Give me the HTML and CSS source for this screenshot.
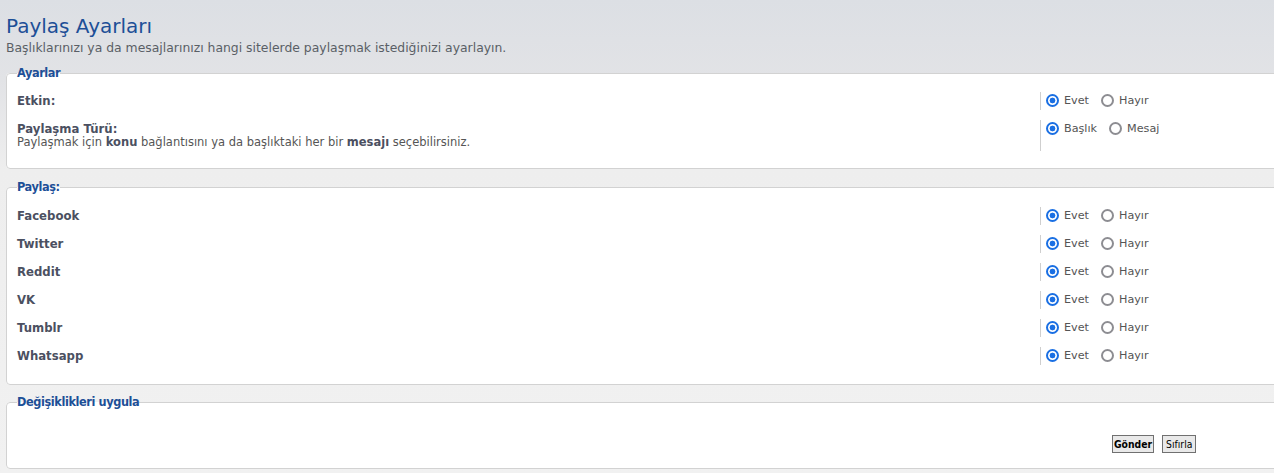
FILE: index.html
```html
<!DOCTYPE html>
<html lang="tr">
<head>
<meta charset="utf-8">
<title>Paylaş Ayarları</title>
<link rel="stylesheet" href="styles.css">
</head>
<body>
<div class="page">
  <div class="head">
    <h1 class="title">Paylaş Ayarları</h1>
    <p class="subtitle">Başlıklarınızı ya da mesajlarınızı hangi sitelerde paylaşmak istediğinizi ayarlayın.</p>
  </div>

  <fieldset class="box settings">
    <legend class="legend">Ayarlar</legend>
    <div class="row first">
      <div class="label"><span class="name">Etkin:</span></div>
      <div class="opts">
        <label class="opt"><input type="radio" name="enabled" checked> Evet</label>
        <label class="opt"><input type="radio" name="enabled"> Hayır</label>
      </div>
    </div>
    <div class="row">
      <div class="label">
        <span class="name">Paylaşma Türü:</span>
        <span class="desc">Paylaşmak için <b>konu</b> bağlantısını ya da başlıktaki her bir <b>mesajı</b> seçebilirsiniz.</span>
      </div>
      <div class="opts">
        <label class="opt"><input type="radio" name="type" checked> Başlık</label>
        <label class="opt"><input type="radio" name="type"> Mesaj</label>
      </div>
    </div>
  </fieldset>

  <fieldset class="box share">
    <legend class="legend">Paylaş:</legend>
    <div class="row first">
      <div class="label"><span class="name">Facebook</span></div>
      <div class="opts">
        <label class="opt"><input type="radio" name="fb" checked> Evet</label>
        <label class="opt"><input type="radio" name="fb"> Hayır</label>
      </div>
    </div>
    <div class="row">
      <div class="label"><span class="name">Twitter</span></div>
      <div class="opts">
        <label class="opt"><input type="radio" name="tw" checked> Evet</label>
        <label class="opt"><input type="radio" name="tw"> Hayır</label>
      </div>
    </div>
    <div class="row">
      <div class="label"><span class="name">Reddit</span></div>
      <div class="opts">
        <label class="opt"><input type="radio" name="rd" checked> Evet</label>
        <label class="opt"><input type="radio" name="rd"> Hayır</label>
      </div>
    </div>
    <div class="row">
      <div class="label"><span class="name">VK</span></div>
      <div class="opts">
        <label class="opt"><input type="radio" name="vk" checked> Evet</label>
        <label class="opt"><input type="radio" name="vk"> Hayır</label>
      </div>
    </div>
    <div class="row">
      <div class="label"><span class="name">Tumblr</span></div>
      <div class="opts">
        <label class="opt"><input type="radio" name="tb" checked> Evet</label>
        <label class="opt"><input type="radio" name="tb"> Hayır</label>
      </div>
    </div>
    <div class="row">
      <div class="label"><span class="name">Whatsapp</span></div>
      <div class="opts">
        <label class="opt"><input type="radio" name="wa" checked> Evet</label>
        <label class="opt"><input type="radio" name="wa"> Hayır</label>
      </div>
    </div>
  </fieldset>

  <fieldset class="box apply">
    <legend class="legend">Değişiklikleri uygula</legend>
    <div class="actions">
      <button type="submit" class="btn primary">Gönder</button>
      <button type="reset" class="btn">Sıfırla</button>
    </div>
  </fieldset>
</div>
</body>
</html>
```

FILE: styles.css
```css
html, body {
  margin: 0;
  padding: 0;
}
body {
  overflow: hidden;
  background: linear-gradient(#dcdfe4 0px, #e2e3e6 80px, #eeeeee 170px, #f1f1f1 473px);
  font-family: "DejaVu Sans", "Liberation Sans", sans-serif;
  color: #555;
  font-size: 11.5px;
}
.page {
  width: 1340px;
  padding: 0 0 0 6px;
}
.head {
  padding-top: 13px;
  padding-bottom: 10px;
}
.title {
  margin: 0;
  font-size: 20px;
  line-height: 26px;
  font-weight: normal;
  color: #1d4f97;
}
.subtitle {
  margin: 1px 0 0;
  font-size: 12.4px;
  line-height: 16px;
  color: #5a5f66;
}
.box {
  margin: 0 0 11px;
  padding: 0 10px 17px;
  border: 1px solid #d2d2d2;
  border-radius: 4px;
  background: #fff;
  min-inline-size: 0;
}
.box.share {
  margin-bottom: 10px;
  padding-bottom: 19px;
}
.box.apply {
  padding-bottom: 15px;
}
.legend {
  padding: 0;
  font-family: "DejaVu Sans Condensed", "DejaVu Sans", sans-serif;
  font-stretch: condensed;
  font-size: 12.6px;
  letter-spacing: -0.4px;
  line-height: 14px;
  font-weight: bold;
  color: #1d4f97;
}
.row {
  display: grid;
  grid-template-columns: 1023px 1fr;
  margin-top: 10px;
}
.row.first {
  margin-top: 12px;
}
.share .row.first {
  margin-top: 13px;
}
.label {
  display: flex;
  flex-direction: column;
  padding: 3px 0 2px;
  line-height: 13px;
}
.name {
  font-weight: bold;
  font-size: 11.7px;
  color: #4b5061;
}
.desc {
  font-size: 11.5px;
  color: #555;
}
.desc b {
  color: #4b5061;
}
.opts {
  display: flex;
  align-items: flex-start;
  gap: 12px;
  border-left: 1px solid #cfcfcf;
  padding: 2px 0 0 5px;
}
.opt {
  display: flex;
  align-items: center;
  gap: 5px;
  font-size: 11.2px;
  line-height: 13px;
  color: #555;
}
.opt input {
  appearance: none;
  -webkit-appearance: none;
  box-sizing: border-box;
  margin: 0;
  width: 13px;
  height: 13px;
  border: 2px solid #8d8d92;
  border-radius: 50%;
  background: #fff;
}
.opt input:checked {
  border-color: #1a6fe3;
  background: radial-gradient(circle, #1a6fe3 0 2.6px, #fff 3.2px);
}
.actions {
  display: flex;
  gap: 8px;
  padding: 26px 0 0 1095px;
}
.btn {
  font-family: "DejaVu Sans Condensed", "DejaVu Sans", sans-serif;
  font-stretch: condensed;
  font-size: 10.3px;
  line-height: 14px;
  height: 18px;
  padding: 0 3px;
  border: 1px solid #707070;
  background: #e9e9e9;
  color: #000;
  border-radius: 0;
}
.btn.primary {
  font-weight: bold;
  padding: 0 1px;
}
```
